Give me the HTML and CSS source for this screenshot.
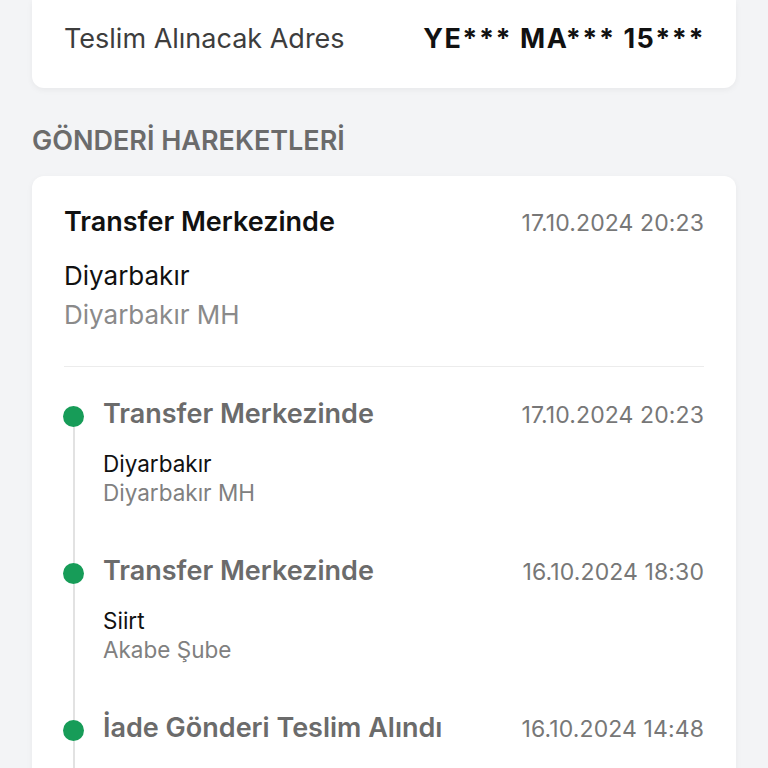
FILE: index.html
```html
<!DOCTYPE html>
<html lang="tr">
<head>
<meta charset="utf-8">
<link rel="stylesheet" href="styles.css">
</head>
<body>
<div class="page">
  <div class="card address">
    <span class="addr-label">Teslim Alınacak Adres</span>
    <span class="addr-value">YE*** MA*** 15***</span>
  </div>

  <h2 class="section-title">GÖNDERİ HAREKETLERİ</h2>

  <div class="card moves">
    <div class="latest">
      <div class="row">
        <span class="latest-title">Transfer Merkezinde</span>
        <span class="date">17.10.2024 20:23</span>
      </div>
      <div class="latest-city">Diyarbakır</div>
      <div class="latest-branch">Diyarbakır MH</div>
    </div>
    <div class="divider"></div>

    <div class="timeline">
      <div class="item">
        <div class="rail"><span class="dot"></span><span class="line"></span></div>
        <div class="content">
          <div class="row">
            <span class="item-title">Transfer Merkezinde</span>
            <span class="date">17.10.2024 20:23</span>
          </div>
          <div class="city">Diyarbakır</div>
          <div class="branch">Diyarbakır MH</div>
        </div>
      </div>
      <div class="item">
        <div class="rail"><span class="dot"></span><span class="line"></span></div>
        <div class="content">
          <div class="row">
            <span class="item-title">Transfer Merkezinde</span>
            <span class="date">16.10.2024 18:30</span>
          </div>
          <div class="city">Siirt</div>
          <div class="branch">Akabe Şube</div>
        </div>
      </div>
      <div class="item last">
        <div class="rail"><span class="dot"></span><span class="line"></span></div>
        <div class="content">
          <div class="row">
            <span class="item-title">İade Gönderi Teslim Alındı</span>
            <span class="date">16.10.2024 14:48</span>
          </div>
        </div>
      </div>
    </div>
  </div>
</div>
</body>
</html>
```

FILE: styles.css
```css
* { box-sizing: border-box; }
html, body { margin: 0; padding: 0; }
body {
  background: #f3f4f6;
  font-family: Inter, "Noto Sans", sans-serif;
  width: 768px;
  height: 768px;
  overflow: hidden;
}
.page { padding: 0 32px; }

.card {
  background: #ffffff;
  border-radius: 12px;
  box-shadow: 0 2px 6px rgba(0, 0, 0, 0.05);
}

.address {
  border-radius: 0 0 12px 12px;
  padding: 23px 32px 33px;
  display: flex;
  justify-content: space-between;
  align-items: baseline;
  line-height: 32px;
  font-size: 27px;
}
.addr-label { color: #3d3d3d; font-weight: 400; }
.addr-value { color: #111111; font-weight: 700; letter-spacing: 1.5px; margin-right: -1px; }

.section-title {
  margin: 37px 0 19px;
  font-size: 27px;
  line-height: 32px;
  font-weight: 600;
  color: #6b6b6b;
}

.moves { padding: 30px 32px 0; height: 640px; }

.row {
  display: flex;
  justify-content: space-between;
  align-items: baseline;
  line-height: 32px;
}
.latest-title { font-size: 27px; font-weight: 600; color: #111111; }
.date { font-size: 23px; color: #777777; font-weight: 400; letter-spacing: 0.1px; }
.latest-city { margin-top: 21px; font-size: 26px; line-height: 32px; color: #111111; }
.latest-branch { margin-top: 7px; font-size: 26px; line-height: 32px; color: #8a8a8a; }

.divider { height: 1px; background: #ececec; margin-top: 35px; }

.timeline { padding-top: 31px; }
.item { display: flex; }
.rail {
  width: 21px;
  margin-left: -1px;
  margin-right: 19px;
  display: flex;
  flex-direction: column;
  align-items: center;
}
.dot {
  width: 21px;
  height: 21px;
  border-radius: 50%;
  background: #179c58;
  margin-top: 8px;
  flex: none;
}
.line {
  width: 2px;
  flex: 1;
  background: #e2e2e2;
  margin-bottom: -8px;
}
.content { flex: 1; padding-bottom: 48px; }
.last .content { min-height: 156px; }
.item-title { font-size: 27px; font-weight: 600; color: #6b6b6b; }
.city { margin-top: 18px; font-size: 22.5px; line-height: 29px; color: #111111; }
.branch { font-size: 22.5px; line-height: 29px; color: #808080; }
```
